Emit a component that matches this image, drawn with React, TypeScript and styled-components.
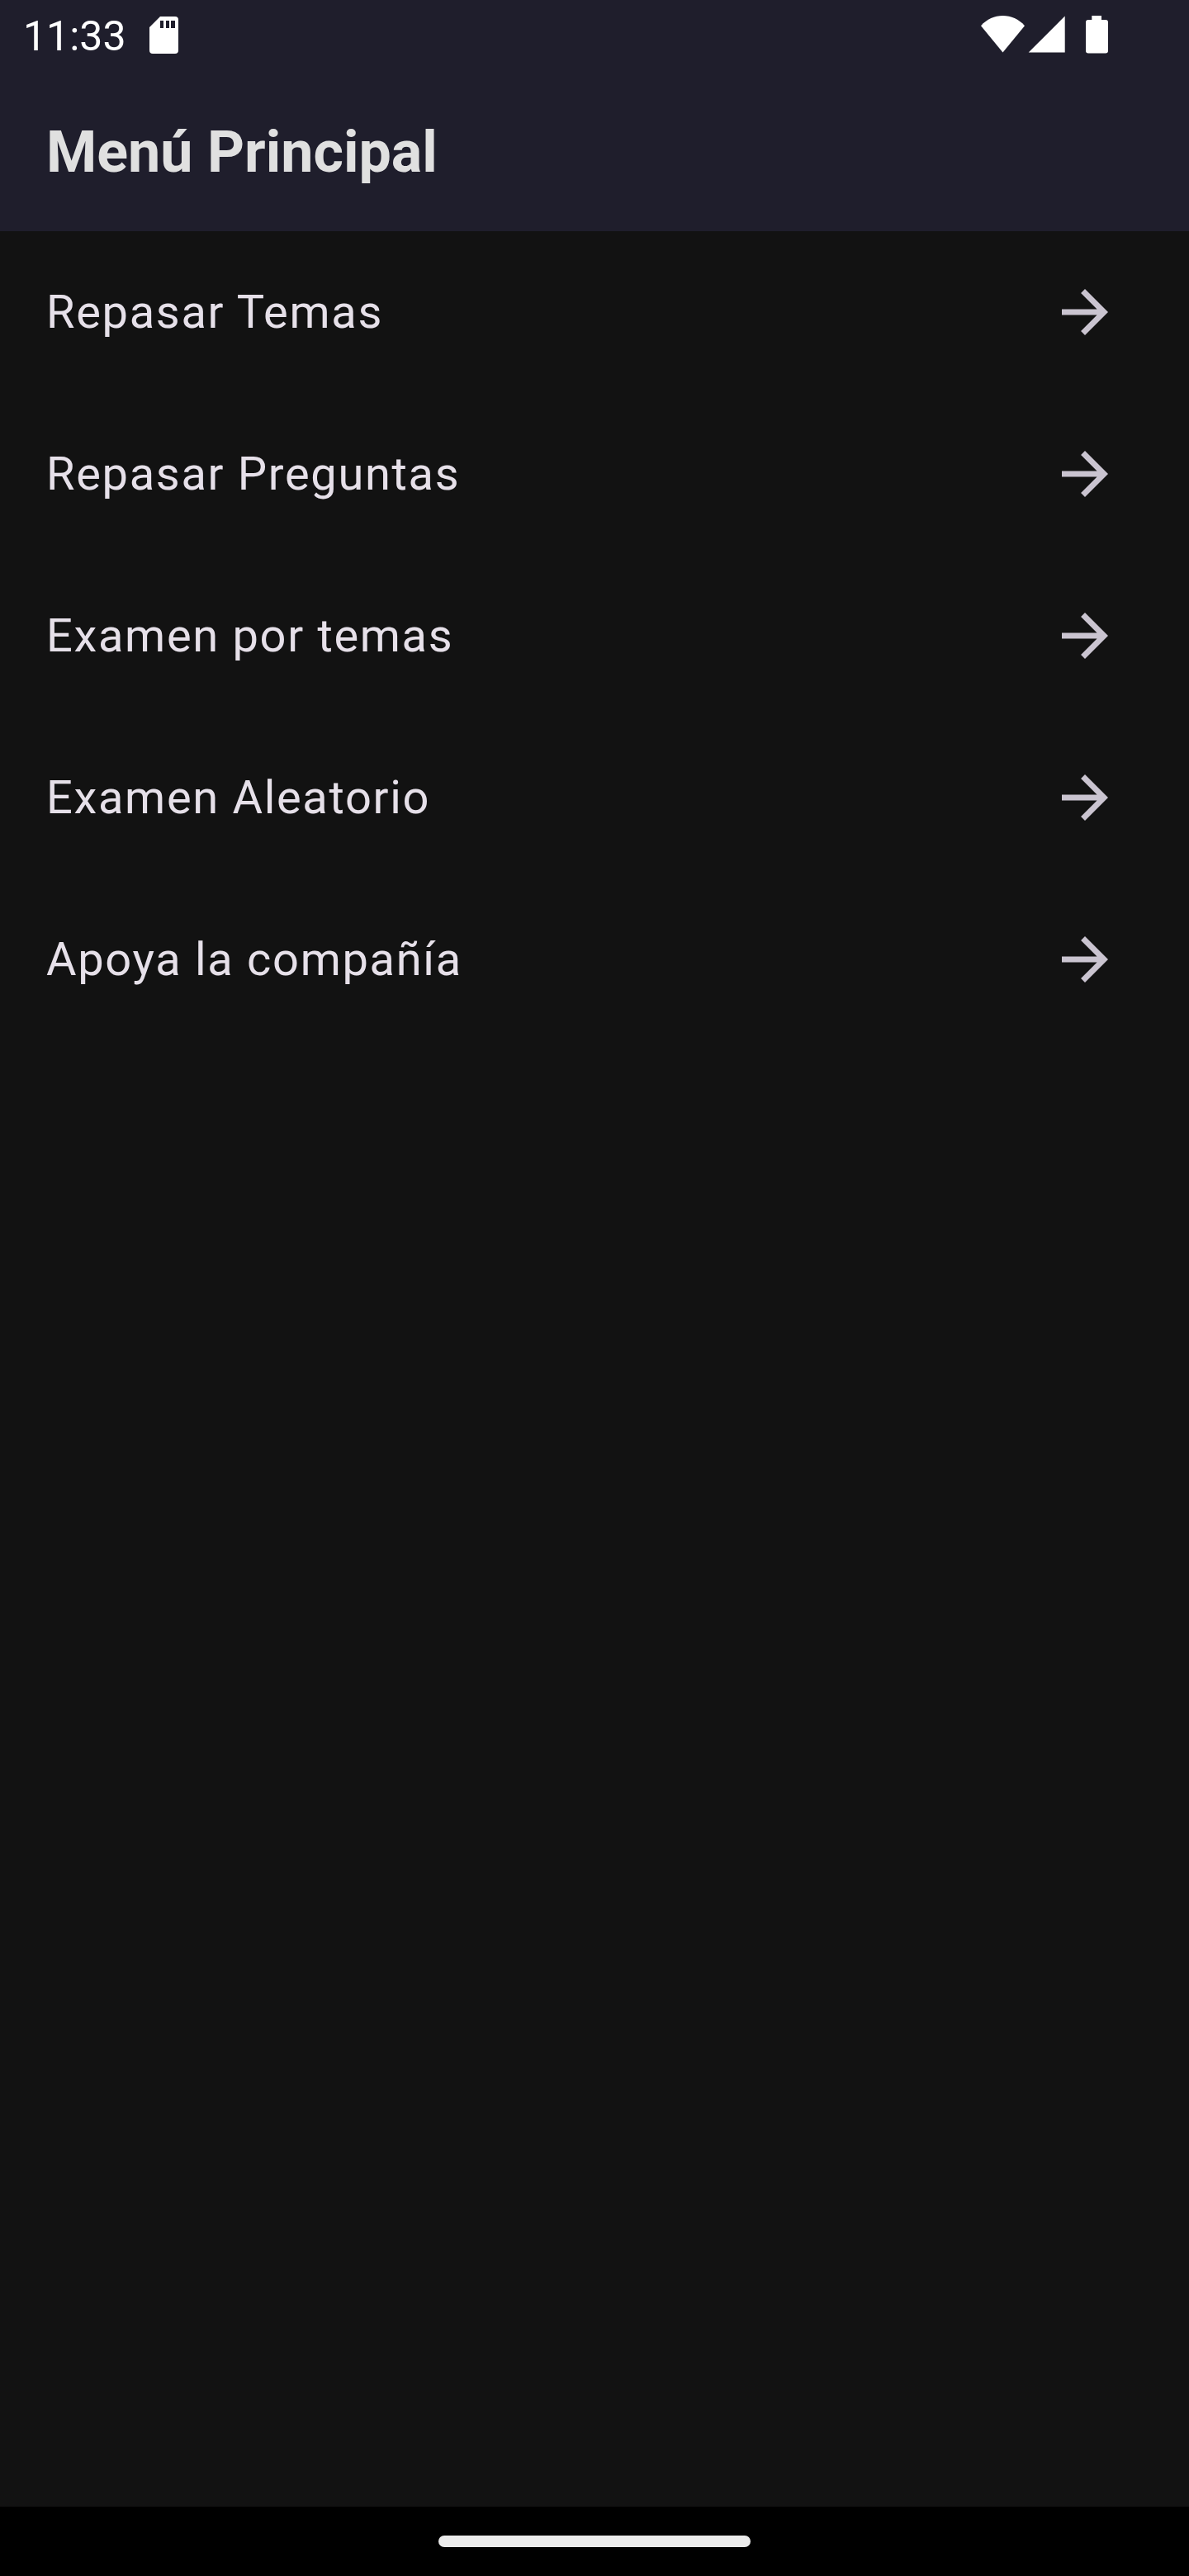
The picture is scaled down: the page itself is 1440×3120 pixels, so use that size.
import React from "react";
import styled, { createGlobalStyle } from "styled-components";

const GlobalStyle = createGlobalStyle`
  *, *::before, *::after { box-sizing: border-box; }
  body { margin: 0; background: #121212; font-family: Roboto, sans-serif; color: #e6e0e9; }
`;

const Screen = styled.div`
  display: flex;
  flex-direction: column;
  min-height: 100vh;
  background: #121212;
`;

const StatusBar = styled.div`
  display: flex;
  align-items: center;
  justify-content: space-between;
  height: 88px;
  padding: 0 98px 0 28px;
  background: #1f1e2c;
  color: #ffffff;
`;

const StatusGroup = styled.div`
  display: flex;
  align-items: center;
  gap: 28px;
`;

const Clock = styled.time`
  font-size: 50px;
  line-height: 60px;
`;

const AppBar = styled.header`
  display: flex;
  align-items: center;
  height: 192px;
  padding: 0 56px;
  background: #1f1e2c;
  color: #e0e0e0;
`;

const Title = styled.h1`
  margin: 0;
  font-size: 70px;
  line-height: 88px;
  font-weight: 700;
`;

const Menu = styled.nav`
  display: flex;
  flex: 1;
  flex-direction: column;
`;

const MenuItem = styled.a`
  display: flex;
  align-items: center;
  justify-content: space-between;
  height: 196px;
  padding: 0 84px 0 56px;
  color: inherit;
  font-size: 56px;
  line-height: 84px;
  letter-spacing: 0.03em;
  text-decoration: none;
`;

const ArrowIcon = styled.svg`
  width: 84px;
  height: 84px;
  fill: #cac4d0;
`;

const NavigationBar = styled.footer`
  display: flex;
  align-items: center;
  justify-content: center;
  height: 84px;
  background: #000000;
`;

const HomeHandle = styled.button`
  width: 378px;
  height: 14px;
  padding: 0;
  border: 0;
  border-radius: 7px;
  background: #ebebeb;
`;

const items = ["Repasar Temas", "Repasar Preguntas", "Examen por temas", "Examen Aleatorio", "Apoya la compañía"];

export default function App() {
  return (
    <Screen>
      <GlobalStyle />
      <StatusBar>
        <StatusGroup>
          <Clock>11:33</Clock>
          <svg width="35" height="48" viewBox="0 0 35 48" fill="#fff" aria-hidden="true">
            <path fillRule="evenodd" d="M13 0H31Q35 0 35 4V41Q35 45 31 45H4Q0 45 0 41V13ZM13 5V14H17V5ZM20 5V14H24V5ZM26 5V14H31V5Z" />
          </svg>
        </StatusGroup>
        <svg width="154" height="50" viewBox="0 0 154 50" fill="#fff" aria-hidden="true">
          <path d="M0 12.3C14 -4 39 -4 53 12.3L26.5 44.5Z" />
          <path d="M101.7 0.5V44.5H57.7Z" />
          <path d="M134.3 0H146V5H151Q154 5 154 8V42.5Q154 45.5 151 45.5H130Q127 45.5 127 42.5V8Q127 5 130 5H134.3Z" />
        </svg>
      </StatusBar>
      <AppBar>
        <Title>Menú Principal</Title>
      </AppBar>
      <Menu>
        {items.map((label) => (
          <MenuItem key={label} href="#">
            {label}
            <ArrowIcon viewBox="0 0 24 24" aria-hidden="true">
              <path d="M12 4l-1.41 1.41L16.17 11H4v2h12.17l-5.58 5.59L12 20l8-8z" />
            </ArrowIcon>
          </MenuItem>
        ))}
      </Menu>
      <NavigationBar>
        <HomeHandle aria-label="Inicio" />
      </NavigationBar>
    </Screen>
  );
}
